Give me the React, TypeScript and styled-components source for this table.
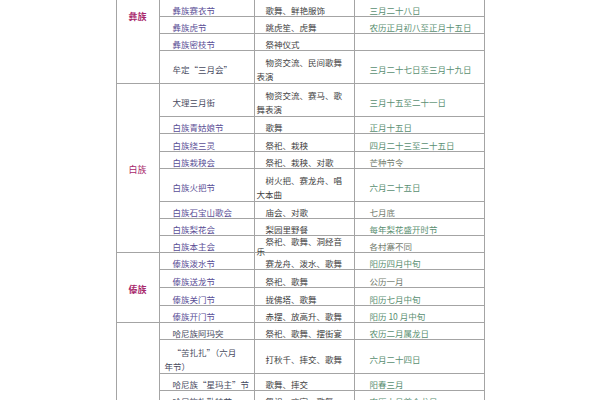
import styled, { createGlobalStyle } from "styled-components";

interface IRow {
  h: number;
  name: string[];
  act: string[];
  date: string;
  nameTone?: "purple" | "dark";
  dateTone?: "green" | "gray";
  tight?: boolean;
}

interface IGroup {
  label: string;
  align: "start" | "center" | "end";
  bold: boolean;
  rows: IRow[];
}

const colors = {
  line: "#a4a4a4",
  label: "#a8286c",
  purple: "#5a4e96",
  dark: "#474a5e",
  text: "#3e3e3e",
  green: "#5a8f72",
  gray: "#737c6e",
};

const groups: IGroup[] = [
  {
    label: "彝族",
    align: "start",
    bold: true,
    rows: [
      { h: 17, name: ["彝族赛衣节"], act: ["歌舞、鲜艳服饰"], date: "三月二十八日" },
      { h: 17, name: ["彝族虎节"], act: ["跳虎笙、虎舞"], date: "农历正月初八至正月十五日" },
      { h: 17, name: ["彝族密枝节"], act: ["祭神仪式"], date: "" },
      { h: 33, name: ["牟定“三月会”"], act: ["物资交流、民间歌舞", "表演"], date: "三月二十七日至三月十九日", nameTone: "dark" },
    ],
  },
  {
    label: "白族",
    align: "center",
    bold: false,
    rows: [
      { h: 33, name: ["大理三月街"], act: ["物资交流、赛马、歌", "舞表演"], date: "三月十五至二十一日", nameTone: "dark" },
      { h: 17, name: ["白族青姑娘节"], act: ["歌舞"], date: "正月十五日" },
      { h: 18, name: ["白族绕三灵"], act: ["祭祀、栽秧"], date: "四月二十三至二十五日" },
      { h: 17, name: ["白族栽秧会"], act: ["祭祀、栽秧、对歌"], date: "芒种节令", dateTone: "gray" },
      { h: 33, name: ["白族火把节"], act: ["树火把、赛龙舟、唱", "大本曲"], date: "六月二十五日" },
      { h: 17, name: ["白族石宝山歌会"], act: ["庙会、对歌"], date: "七月底", dateTone: "gray" },
      { h: 17, name: ["白族梨花会"], act: ["梨园里野餐"], date: "每年梨花盛开时节" },
      { h: 17, name: ["白族本主会"], act: ["祭祀、歌舞、洞经音", "乐"], date: "各村寨不同", dateTone: "gray", tight: true },
    ],
  },
  {
    label: "傣族",
    align: "center",
    bold: true,
    rows: [
      { h: 17, name: ["傣族泼水节"], act: ["赛龙舟、泼水、歌舞"], date: "阳历四月中旬" },
      { h: 18, name: ["傣族送龙节"], act: ["祭祀、歌舞"], date: "公历一月", dateTone: "gray" },
      { h: 18, name: ["傣族关门节"], act: ["拢佛塔、歌舞"], date: "阳历七月中旬" },
      { h: 17, name: ["傣族开门节"], act: ["赤摆、放高升、歌舞"], date: "阳历 10 月中旬" },
    ],
  },
  {
    label: "哈尼族",
    align: "end",
    bold: true,
    rows: [
      { h: 17, name: ["哈尼族阿玛突"], act: ["祭祀、歌舞、摆街宴"], date: "农历二月属龙日", nameTone: "dark" },
      { h: 34, name: ["“苦扎扎”（六月", "年节）"], act: ["打秋千、摔交、歌舞"], date: "六月二十四日", nameTone: "dark" },
      { h: 17, name: ["哈尼族“星玛主”节"], act: ["歌舞、摔交"], date: "阳春三月", nameTone: "dark" },
      { h: 17, name: ["哈尼族扎勒特节"], act: ["祭祀、欢宴、歌舞"], date: "农历十月首个龙日", nameTone: "dark" },
      { h: 17, name: ["哈尼族开秧门"], act: ["祭祀、插秧"], date: "农历四月", nameTone: "dark" },
    ],
  },
];

const GlobalStyle = createGlobalStyle`
  body {
    margin: 0;
    background: #ffffff;
    font-family: "Noto Sans CJK SC", "Noto Sans", sans-serif;
  }
`;

const Sheet = styled.div<{ $rows: string }>`
  display: grid;
  grid-template-columns: 43px 95px 100px 130px;
  grid-template-rows: ${(props) => props.$rows};
  width: 369px;
  margin: 0 auto;
  border-left: 1px solid ${colors.line};
  box-sizing: border-box;
  width: 369px;
`;

const Cell = styled.div`
  display: flex;
  flex-direction: column;
  justify-content: center;
  box-sizing: border-box;
  min-height: 0;
  padding-top: 4px;
  border-right: 1px solid ${colors.line};
  border-bottom: 1px solid ${colors.line};
  font-size: 8.5px;
  line-height: 14px;
  white-space: nowrap;
`;

const GroupCell = styled(Cell)<{ $span: number; $align: string; $bold: boolean }>`
  grid-column: 1;
  grid-row: span ${(props) => props.$span};
  align-items: center;
  justify-content: ${(props) =>
    props.$align === "start" ? "flex-start" : props.$align === "end" ? "flex-end" : "center"};
  padding-top: ${(props) => (props.$align === "start" ? "10px" : "4px")};
  padding-bottom: ${(props) => (props.$align === "end" ? "6px" : "0")};
  color: ${colors.label};
  font-size: 9px;
  font-weight: ${(props) => (props.$bold ? 700 : 400)};
`;

const NameCell = styled(Cell)<{ $tone: "purple" | "dark" }>`
  grid-column: 2;
  padding-left: 5px;
  text-indent: 8px;
  color: ${(props) => (props.$tone === "dark" ? colors.dark : colors.purple)};
`;

const ActCell = styled(Cell)<{ $tight: boolean }>`
  grid-column: 3;
  padding-left: 2px;
  text-indent: 9px;
  color: ${colors.text};
  line-height: ${(props) => (props.$tight ? "10px" : "14px")};
`;

const DateCell = styled(Cell)<{ $tone: "green" | "gray" }>`
  grid-column: 4;
  padding-left: 15px;
  color: ${(props) => (props.$tone === "gray" ? colors.gray : colors.green)};
`;

const Text = styled.div``;

function Lines({ lines }: { lines: string[] }) {
  return (
    <Text>
      {lines.map((l, i) => (
        <span key={i}>
          {i > 0 && <br />}
          {l}
        </span>
      ))}
    </Text>
  );
}

export default function App() {
  const rows = groups
    .flatMap((g) => g.rows.map((r) => `${r.h}px`))
    .join(" ");

  return (
    <>
      <GlobalStyle />
      <Sheet $rows={rows}>
        {groups.map((g) => [
          <GroupCell
            key={g.label}
            $span={g.rows.length}
            $align={g.align}
            $bold={g.bold}
          >
            {g.label}
          </GroupCell>,
          ...g.rows.flatMap((r, i) => [
            <NameCell key={`${g.label}-n-${i}`} $tone={r.nameTone ?? "purple"}>
              <Lines lines={r.name} />
            </NameCell>,
            <ActCell key={`${g.label}-a-${i}`} $tight={!!r.tight}>
              <Lines lines={r.act} />
            </ActCell>,
            <DateCell key={`${g.label}-d-${i}`} $tone={r.dateTone ?? "green"}>
              {r.date}
            </DateCell>,
          ]),
        ])}
      </Sheet>
    </>
  );
}
